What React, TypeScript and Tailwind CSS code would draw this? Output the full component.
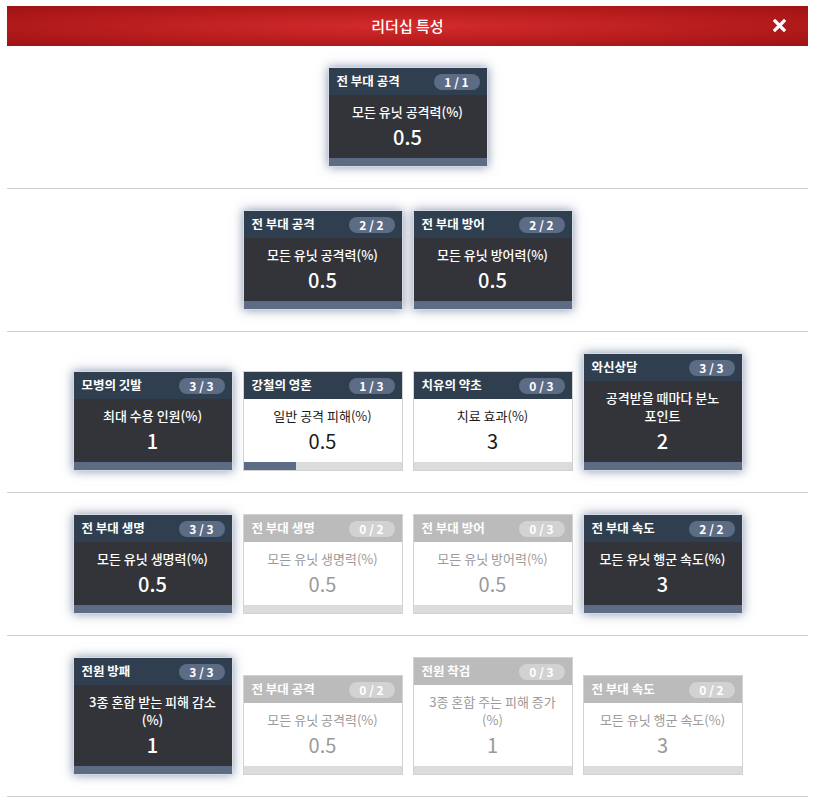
import React from "react";

type State = "active" | "partial" | "locked";
type Card = {
  title: string;
  badge: string;
  desc: string[];
  value: string;
  state: State;
  progress?: number;
};

const rows: Card[][] = [
  [{ title: "전 부대 공격", badge: "1 / 1", desc: ["모든 유닛 공격력(%)"], value: "0.5", state: "active" }],
  [
    { title: "전 부대 공격", badge: "2 / 2", desc: ["모든 유닛 공격력(%)"], value: "0.5", state: "active" },
    { title: "전 부대 방어", badge: "2 / 2", desc: ["모든 유닛 방어력(%)"], value: "0.5", state: "active" },
  ],
  [
    { title: "모병의 깃발", badge: "3 / 3", desc: ["최대 수용 인원(%)"], value: "1", state: "active" },
    { title: "강철의 영혼", badge: "1 / 3", desc: ["일반 공격 피해(%)"], value: "0.5", state: "partial", progress: 1 / 3 },
    { title: "치유의 약초", badge: "0 / 3", desc: ["치료 효과(%)"], value: "3", state: "partial", progress: 0 },
    { title: "와신상담", badge: "3 / 3", desc: ["공격받을 때마다 분노", "포인트"], value: "2", state: "active" },
  ],
  [
    { title: "전 부대 생명", badge: "3 / 3", desc: ["모든 유닛 생명력(%)"], value: "0.5", state: "active" },
    { title: "전 부대 생명", badge: "0 / 2", desc: ["모든 유닛 생명력(%)"], value: "0.5", state: "locked" },
    { title: "전 부대 방어", badge: "0 / 3", desc: ["모든 유닛 방어력(%)"], value: "0.5", state: "locked" },
    { title: "전 부대 속도", badge: "2 / 2", desc: ["모든 유닛 행군 속도(%)"], value: "3", state: "active" },
  ],
  [
    { title: "전원 방패", badge: "3 / 3", desc: ["3종 혼합 받는 피해 감소", "(%)"], value: "1", state: "active" },
    { title: "전 부대 공격", badge: "0 / 2", desc: ["모든 유닛 공격력(%)"], value: "0.5", state: "locked" },
    { title: "전원 착검", badge: "0 / 3", desc: ["3종 혼합 주는 피해 증가", "(%)"], value: "1", state: "locked" },
    { title: "전 부대 속도", badge: "0 / 2", desc: ["모든 유닛 행군 속도(%)"], value: "3", state: "locked" },
  ],
];

function TraitCard({ c }: { c: Card }) {
  const active = c.state === "active";
  const locked = c.state === "locked";
  const wrap = active
    ? "border-[#d6dae2] shadow-[0_0_10px_rgba(60,80,120,0.6)]"
    : "border-[#d2d2d2]";
  const head = locked ? "bg-[#bbbbbb]" : "bg-[#2f3f4f]";
  const badge = locked ? "bg-[#d2d2d2]" : "bg-[#5d6c85]";
  const body = active ? "bg-[#333439] text-white font-medium" : locked ? "bg-white text-[#9a9a9a]" : "bg-white text-[#1a1a1a]";
  return (
    <div className={`w-[160px] flex flex-col border ${wrap}`}>
      <div className={`h-[27px] flex items-center justify-between pl-[8px] pr-[7px] ${head}`}>
        <span className="text-[12.5px] font-bold text-white leading-none">{c.title}</span>
        <span className={`w-[46px] h-[16px] rounded-full flex items-center justify-center text-[12px] font-bold text-white leading-none ${badge}`}>
          {c.badge}
        </span>
      </div>
      <div className={`flex flex-col items-center pt-[8px] pb-[8px] ${body}`}>
        {c.desc.map((d, i) => (
          <div key={i} className="text-[13px] leading-[18px] h-[18px] whitespace-nowrap">
            {d}
          </div>
        ))}
        <div className="mt-[3px] text-[20px] leading-[26px] h-[26px]">{c.value}</div>
      </div>
      {active ? (
        <div className="h-[8px] bg-[#5d6c85]" />
      ) : (
        <div className="h-[8px] bg-[#dcdcdc] flex">
          {c.progress ? (
            <div className="h-full bg-[#5d6c85]" style={{ width: `${c.progress * 100}%` }} />
          ) : null}
        </div>
      )}
    </div>
  );
}

export default function App() {
  return (
    <div
      className="w-[816px] h-[806px] bg-white pl-[7px] pr-[8px] pt-[6px] overflow-hidden"
      style={{ fontFamily: '"Noto Sans CJK KR", "Noto Sans", sans-serif' }}
    >
      <div className="relative h-[40px] flex items-center justify-center bg-[radial-gradient(ellipse_at_center,#d42b2c_0%,#b81d1e_55%,#9e1213_100%)]">
        <span className="text-[15px] font-medium text-white">리더십 특성</span>
        <svg className="absolute right-[22px] top-[13px]" width="13" height="13" viewBox="0 0 13 13">
          <path d="M2 2 L11 11 M11 2 L2 11" stroke="white" strokeWidth="3.2" strokeLinecap="square" />
        </svg>
      </div>
      {rows.map((row, i) => (
        <div key={i} className="py-[21px] border-b border-[#cfcfcf] flex justify-center items-end gap-[10px]">
          {row.map((c, j) => (
            <TraitCard key={j} c={c} />
          ))}
        </div>
      ))}
    </div>
  );
}
